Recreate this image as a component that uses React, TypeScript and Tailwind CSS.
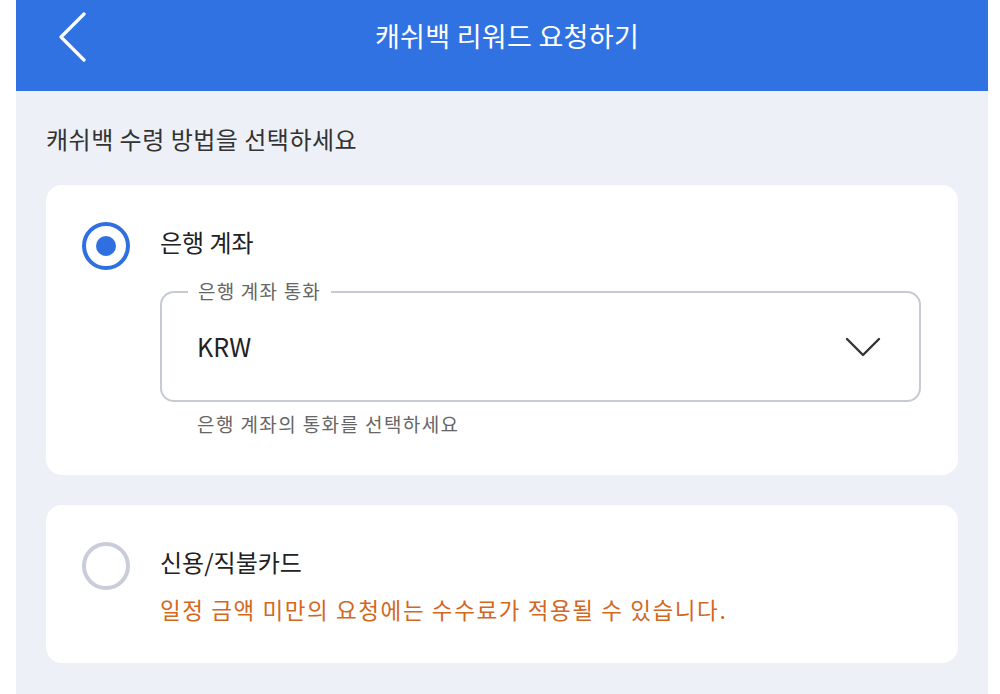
import React from "react";

const FONT = { fontFamily: '"Noto Sans CJK KR", "Noto Sans", sans-serif' };

const RadioDot: React.FC<{ checked: boolean }> = ({ checked }) =>
  checked ? (
    <div className="w-[48px] h-[48px] rounded-full border-[4px] border-[#2f6fe0] flex items-center justify-center shrink-0">
      <div className="w-[20px] h-[20px] rounded-full bg-[#2f6fe0]"></div>
    </div>
  ) : (
    <div className="w-[48px] h-[48px] rounded-full border-[4px] border-[#c9cdda] shrink-0"></div>
  );

const App: React.FC = () => {
  return (
    <div className="w-[1000px] h-[694px] bg-white overflow-hidden" style={FONT}>
      <div className="ml-[16px] w-[972px] h-full bg-[#edf0f7] flex flex-col">
        {/* Header */}
        <div className="h-[91px] bg-[#3172e3] relative flex items-center justify-center shrink-0">
          <svg
            className="absolute left-[40px] top-[12px]"
            width="32"
            height="50"
            viewBox="0 0 32 50"
            fill="none"
          >
            <path d="M28 2 L5 25 L28 48" stroke="white" strokeWidth="3.2" strokeLinecap="round" strokeLinejoin="round" />
          </svg>
          <h1 className="text-[27px] tracking-[0.3px] text-white font-normal -mt-[18px] ml-[10px]">캐쉬백 리워드 요청하기</h1>
        </div>

        <div className="px-[30px] pt-[30px]">
          <p className="text-[24px] tracking-[0.5px] text-[#333] leading-[36px]">캐쉬백 수령 방법을 선택하세요</p>

          {/* Bank account card */}
          <div className="mt-[28px] bg-white rounded-[16px] h-[290px] pl-[36px] pr-[38px] pt-[37px]">
            <div className="flex items-center gap-[30px]">
              <RadioDot checked />
              <span className="text-[24px] text-[#222] -mt-[8px]">은행 계좌</span>
            </div>
            <div className="ml-[78px] mt-[21px]">
              <div className="relative h-[111px] border-2 border-[#c6cad2] rounded-[14px] flex items-center justify-between pl-[35px] pr-[37px] -mr-[1px]">
                <span className="absolute -top-[15px] left-[26px] bg-white px-[10px] text-[19px] tracking-[1.2px] leading-[26px] text-[#666]">
                  은행 계좌 통화
                </span>
                <span className="text-[25px] text-[#222]">KRW</span>
                <svg width="38" height="22" viewBox="0 0 38 22" fill="none">
                  <path d="M3 3 L19 19 L35 3" stroke="#333" strokeWidth="2.4" strokeLinecap="round" strokeLinejoin="round" />
                </svg>
              </div>
              <p className="mt-[8px] pl-[37px] text-[19px] tracking-[1.4px] text-[#666] leading-[28px]">은행 계좌의 통화를 선택하세요</p>
            </div>
          </div>

          {/* Card option */}
          <div className="mt-[30px] bg-white rounded-[16px] h-[158px] pl-[36px] pr-[38px] pt-[37px]">
            <div className="flex items-start gap-[30px]">
              <RadioDot checked={false} />
              <div className="flex flex-col">
                <span className="text-[24px] text-[#222] leading-[40px]">신용/직불카드</span>
                <span className="mt-[12px] text-[22.5px] tracking-[1.6px] text-[#d2681f] leading-[30px]">
                  일정 금액 미만의 요청에는 수수료가 적용될 수 있습니다.
                </span>
              </div>
            </div>
          </div>
        </div>
      </div>
    </div>
  );
};

export default App;
